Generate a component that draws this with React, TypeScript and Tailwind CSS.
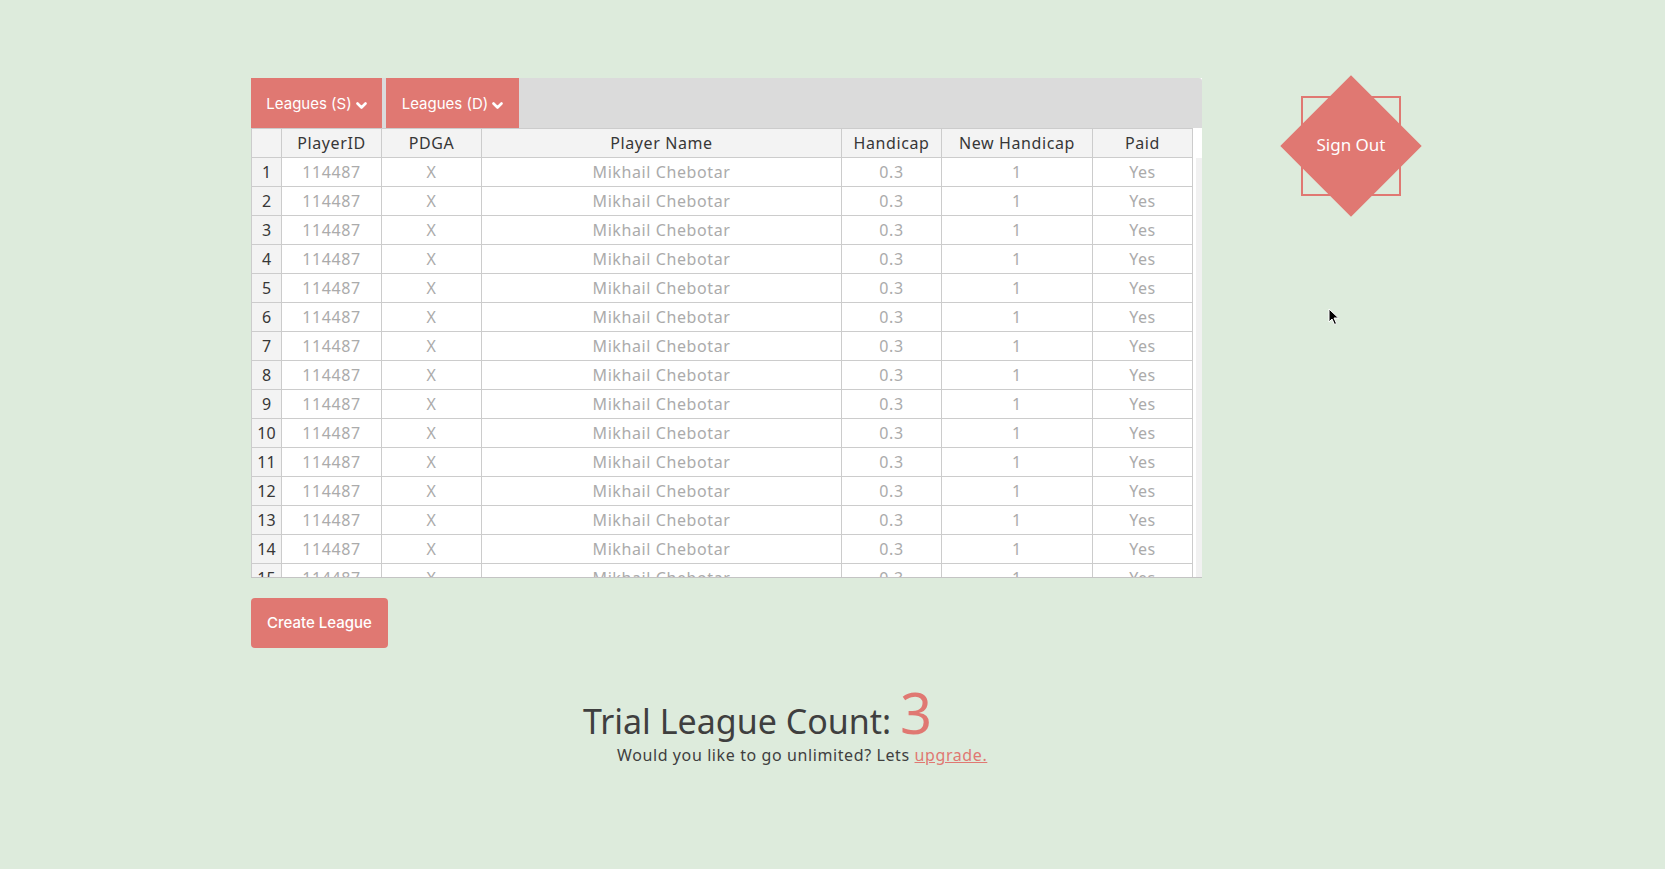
import React from "react";

const rows = Array.from({ length: 15 }, (_, i) => i + 1);
const cols = [
  { key: "id", label: "PlayerID", w: "w-[100px]" },
  { key: "pdga", label: "PDGA", w: "w-[100px]" },
  { key: "name", label: "Player Name", w: "w-[360px]" },
  { key: "hc", label: "Handicap", w: "w-[100px]" },
  { key: "nhc", label: "New Handicap", w: "w-[151px]" },
  { key: "paid", label: "Paid", w: "w-[100px]" },
];
const values: Record<string, string> = {
  id: "114487",
  pdga: "X",
  name: "Mikhail Chebotar",
  hc: "0.3",
  nhc: "1",
  paid: "Yes",
};

function Chevron() {
  return (
    <svg width="11" height="8" viewBox="0 0 11 8" className="ml-[4px] mt-[3px]">
      <path d="M1.5 1.5 L5.5 5.5 L9.5 1.5" stroke="white" strokeWidth="2.6" fill="none" strokeLinecap="round" strokeLinejoin="round" />
    </svg>
  );
}

export default function App() {
  const mont = { fontFamily: '"Noto Sans", "Open Sans", sans-serif' };
  const ui = { fontFamily: 'Inter, "Liberation Sans", sans-serif' };
  return (
    <div className="min-h-screen w-full bg-[#ddebdc] relative" style={mont}>
      <div className="flex pt-[78px] pl-[251px] gap-[99px]">
        <div className="w-[951px] flex flex-col">
          {/* table card */}
          <div className="w-[951px] bg-white border-b border-[#c4c4c4]">
            <div className="h-[50px] bg-[#dbdbdb] rounded-tr-[3px] flex gap-[4px]">
              {["Leagues (S)", "Leagues (D)"].map((t, i) => (
                <div
                  key={t}
                  className={`${i === 0 ? "w-[131px]" : "w-[133px]"} h-[50px] pt-[2px] bg-[#e07872] text-white flex items-center justify-center text-[15px]`}
                  style={ui}
                >
                  <span>{t}</span>
                  <Chevron />
                </div>
              ))}
            </div>
            <div className="h-[449px] overflow-hidden flex">
              <table className="border-collapse table-fixed w-[941px] text-[16px] tracking-[0.6px]">
                <thead>
                  <tr className="h-[29px]">
                    <th className="w-[30px] bg-[#f3f3f3] border border-[#cccccc] font-normal"></th>
                    {cols.map((c) => (
                      <th key={c.key} className={`${c.w} bg-[#f3f3f3] border border-[#cccccc] font-normal text-[#373737] p-0`}>
                        {c.label}
                      </th>
                    ))}
                  </tr>
                </thead>
                <tbody>
                  {rows.map((r) => (
                    <tr key={r} className="h-[29px]">
                      <td className="bg-[#f3f3f3] border border-[#cccccc] text-center text-[#373737] p-0 tracking-normal">{r}</td>
                      {cols.map((c) => (
                        <td key={c.key} className="border border-[#cccccc] text-center text-[#ababab] p-0">
                          {values[c.key]}
                        </td>
                      ))}
                    </tr>
                  ))}
                </tbody>
              </table>
              <div className="w-[10px] pt-[30px] pl-[3px]">
                <div className="w-[6px] h-full bg-[#f1f1f1]"></div>
              </div>
            </div>
          </div>

          <button
            className="mt-[20px] w-[137px] h-[50px] rounded-[4px] bg-[#e07872] text-white text-[15px] font-medium"
            style={ui}
          >
            Create League
          </button>

          <div className="mt-[36px] pl-[332px] text-[#3f3f3f] text-[34px] leading-[56px] whitespace-nowrap">
            Trial League Count: <span className="text-[#e07872] text-[56px] align-baseline">3</span>
          </div>
          <div className="-mt-[6px] pl-[366px] text-[#3f3f3f] text-[16px] leading-[24px] tracking-[0.6px] whitespace-nowrap">
            Would you like to go unlimited? Lets{" "}
            <a className="text-[#e07872] underline">upgrade.</a>
          </div>
        </div>

        {/* sign out */}
        <div className="mt-[18px] w-[100px] h-[100px] border-2 border-[#e07872] relative shrink-0">
          <div className="absolute left-[-2px] top-[-2px] w-[100px] h-[100px] bg-[#e07872] rotate-45"></div>
          <div className="absolute inset-0 pb-[2px] flex items-center justify-center text-white text-[17px]">Sign Out</div>
        </div>
      </div>

      {/* mouse cursor */}
      <svg className="absolute left-[1328px] top-[308px]" width="12" height="18" viewBox="0 0 12 18">
        <path d="M1 1 L1 14 L4 11 L6.5 16.5 L8.5 15.5 L6 10 L10.5 10 Z" fill="black" stroke="white" strokeWidth="1" />
      </svg>
    </div>
  );
}
